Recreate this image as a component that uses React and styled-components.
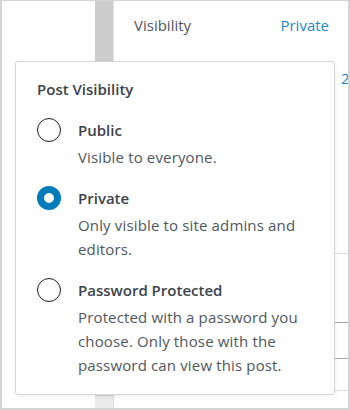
import React from 'react';
import styled, { createGlobalStyle } from 'styled-components';

const GlobalStyle = createGlobalStyle`
  body {
    margin: 0;
    background: #fff;
    font-family: "Open Sans", "Noto Sans", sans-serif;
  }
`;

const options = [
  { id: 'public', title: 'Public', text: 'Visible to everyone.' },
  { id: 'private', title: 'Private', text: 'Only visible to site admins and editors.' },
  {
    id: 'password',
    title: 'Password Protected',
    text: 'Protected with a password you choose. Only those with the password can view this post.',
  },
];

const App = () => {
  const selected = 'private';

  return (
    <>
      <GlobalStyle />
      <Frame>
        <Gutter />
        <Bar />
        <Panel>
          <Row>
            <Label>Visibility</Label>
            <Link>Private</Link>
          </Row>
          <Row className="publish">
            <Label>Publish</Label>
            <Link>2021/06/14 10:22</Link>
          </Row>
          <Divider top={165} />
          <Field />
          <Divider top={31} />
        </Panel>

        <Popover>
          <Heading>Post Visibility</Heading>
          <List>
            {options.map(o => (
              <Option key={o.id}>
                <Radio checked={selected === o.id} />
                <div>
                  <OptionTitle>{o.title}</OptionTitle>
                  <OptionText>{o.text}</OptionText>
                </div>
              </Option>
            ))}
          </List>
        </Popover>
      </Frame>
    </>
  );
};

export default App;

const Frame = styled.div`
  position: relative;
  width: 350px;
  height: 410px;
  box-sizing: border-box;
  border: 2px solid #d4d4d4;
  border-top-width: 1px;
  display: flex;
  overflow: hidden;
  background: #fff;
`;

const Gutter = styled.div`
  width: 93px;
  flex: none;
`;

const Bar = styled.div`
  width: 18px;
  flex: none;
  border-right: 1px solid #e2e2e2;
  background: linear-gradient(#cdcdcd 0, #cdcdcd calc(100% - 12px), #ececec calc(100% - 12px));
`;

const Panel = styled.div`
  flex: 1;
  min-width: 0;
  padding: 14px 0 0 20px;
  overflow: hidden;
`;

const Row = styled.div`
  display: flex;
  justify-content: space-between;
  padding-right: 19px;
  font-size: 15px;
  line-height: 20px;
  white-space: nowrap;
  &.publish {
    justify-content: flex-start;
    margin-top: 33px;
    padding-right: 0;
    span:first-child {
      width: 207px;
      flex: none;
    }
  }
`;

const Label = styled.span`
  color: #50575e;
`;

const Link = styled.span`
  color: #1f88c8;
`;

const Divider = styled.div`
  margin-top: ${p => p.top}px;
  border-top: 1px solid #dcdcde;
`;

const Field = styled.div`
  margin-top: 68px;
  height: 35px;
  border-top: 1px solid #a7aaad;
  border-bottom: 1px solid #a7aaad;
`;

const Popover = styled.div`
  position: absolute;
  left: 13px;
  top: 60px;
  width: 320px;
  height: 334px;
  box-sizing: border-box;
  padding: 17px 20px 0 21px;
  background: #fff;
  border: 1px solid #d6d6d6;
  border-radius: 3px;
  box-shadow: 0 2px 6px rgba(0, 0, 0, 0.06);
`;

const Heading = styled.div`
  font-size: 15px;
  line-height: 20px;
  font-weight: 600;
  color: #3c434a;
`;

const List = styled.div`
  margin-top: 19px;
  display: flex;
  flex-direction: column;
  gap: 17px;
`;

const Option = styled.div`
  display: grid;
  grid-template-columns: 24px 1fr;
  column-gap: 17px;
  align-items: start;
`;

const Radio = styled.span`
  width: 24px;
  height: 24px;
  box-sizing: border-box;
  border-radius: 50%;
  border: ${p => (p.checked ? '7.5px solid #007cba' : '1px solid #1e1e1e')};
  background: #fff;
`;

const OptionTitle = styled.div`
  font-size: 15px;
  line-height: 24px;
  font-weight: 600;
  color: #3c434a;
`;

const OptionText = styled.div`
  margin-top: 3px;
  width: 240px;
  font-size: 15px;
  line-height: 24px;
  letter-spacing: 0.15px;
  color: #50575e;
`;
